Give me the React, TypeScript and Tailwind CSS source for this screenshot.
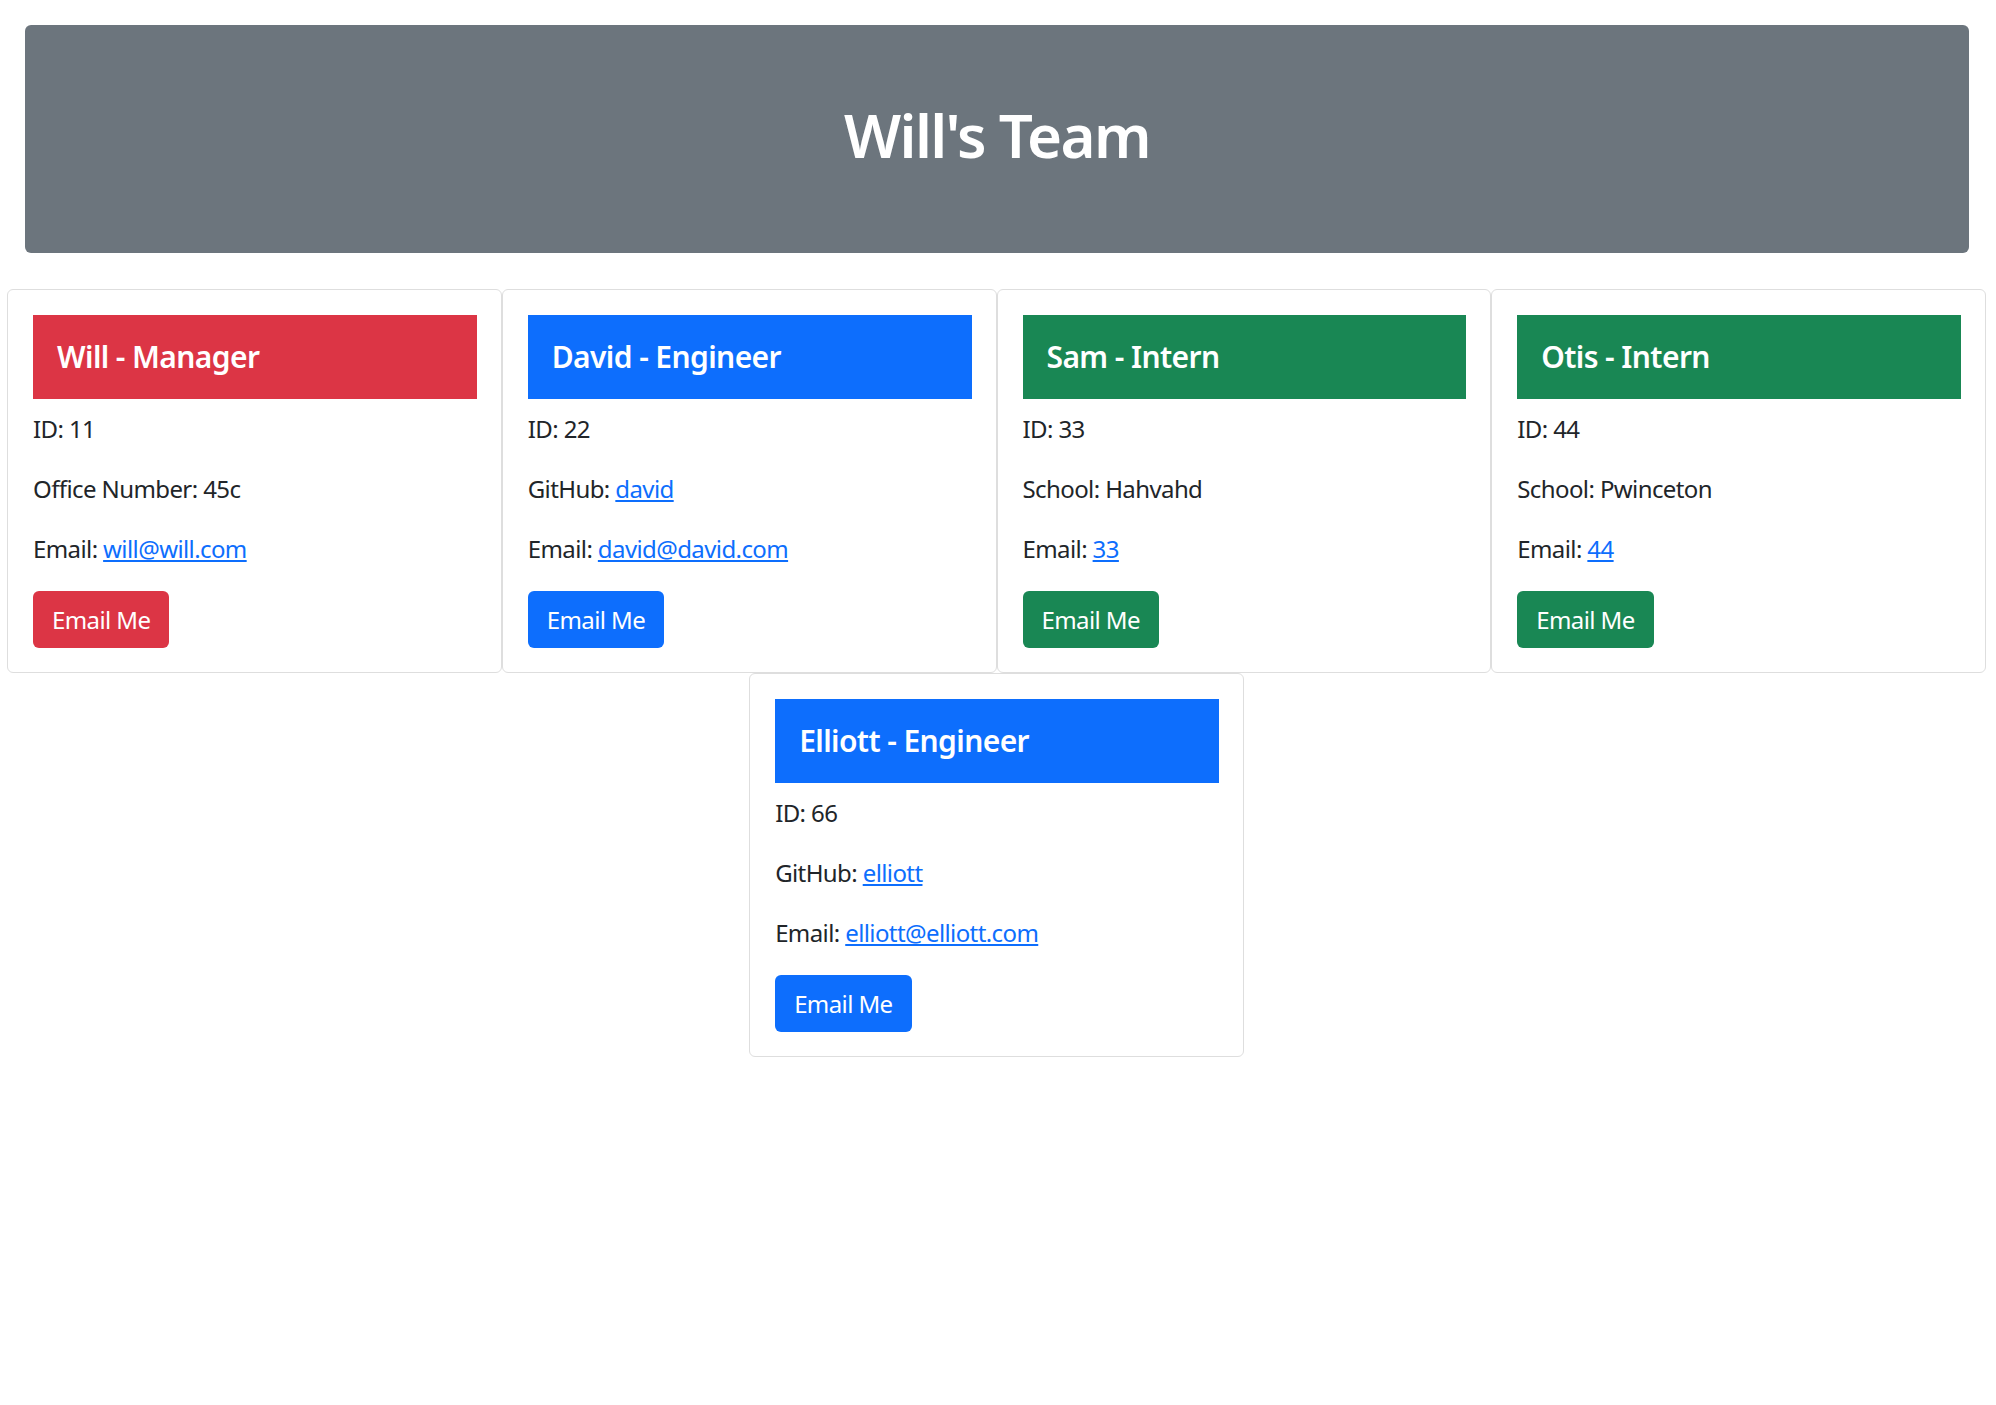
import React from "react";

// Team data
interface Member {
  name: string;
  role: "Manager" | "Engineer" | "Intern";
  id: number;
  email: string;
  office?: string;
  github?: string;
  school?: string;
}

const team: Member[] = [
  { name: "Will", role: "Manager", id: 11, email: "will@will.com", office: "45c" },
  { name: "David", role: "Engineer", id: 22, email: "david@david.com", github: "david" },
  { name: "Sam", role: "Intern", id: 33, email: "33", school: "Hahvahd" },
  { name: "Otis", role: "Intern", id: 44, email: "44", school: "Pwinceton" },
  { name: "Elliott", role: "Engineer", id: 66, email: "elliott@elliott.com", github: "elliott" },
];

const roleColor = {
  Manager: "bg-[#dc3545]",
  Engineer: "bg-[#0d6efd]",
  Intern: "bg-[#198754]",
};

const Card = ({ member }: { member: Member }) => {
  const color = roleColor[member.role];
  return (
    <div className="w-1/4 shrink-0 rounded-[6px] border border-[#dedede] bg-white pl-[25px] pr-6 pt-[25px] pb-6">
      <div className={`${color} h-[84px] px-6 py-6 text-[30px] leading-[36px] font-semibold tracking-[-0.02em] text-white`}>
        {member.name} - {member.role}
      </div>
      <div className="mt-3 text-[24px] leading-[36px] tracking-[-0.025em] text-[#212529]">
        <p className="mb-6">ID: {member.id}</p>
        {member.office && <p className="mb-6">Office Number: {member.office}</p>}
        {member.github && (
          <p className="mb-6">
            GitHub:{" "}
            <a href="#" className="text-[#0d6efd] underline">
              {member.github}
            </a>
          </p>
        )}
        {member.school && <p className="mb-6">School: {member.school}</p>}
        <p className="mb-6">
          Email:{" "}
          <a href="#" className="text-[#0d6efd] underline">
            {member.email}
          </a>
        </p>
        <button
          className={`${color} h-[57px] rounded-[6px] px-[19px] text-[24px] leading-[36px] tracking-[-0.025em] text-white`}
        >
          Email Me
        </button>
      </div>
    </div>
  );
};

const App = () => {
  return (
    <div
      className="min-h-screen bg-white"
      style={{ fontFamily: '"Segoe UI", "Noto Sans", "Open Sans", sans-serif' }}
    >
      <div className="ml-[25px] mr-[27px] pt-[25px]">
        <div className="flex h-[228px] items-center justify-center rounded-[6px] bg-[#6c757d]">
          <h1 className="pb-2 text-[60px] leading-[72px] font-semibold tracking-[-0.028em] text-white">
            Will's Team
          </h1>
        </div>
      </div>

      <div className="mt-[36px] ml-[7px] mr-[10px] flex flex-wrap justify-center">
        {team.map((m) => (
          <Card key={m.id} member={m} />
        ))}
      </div>
    </div>
  );
};

export default App;
